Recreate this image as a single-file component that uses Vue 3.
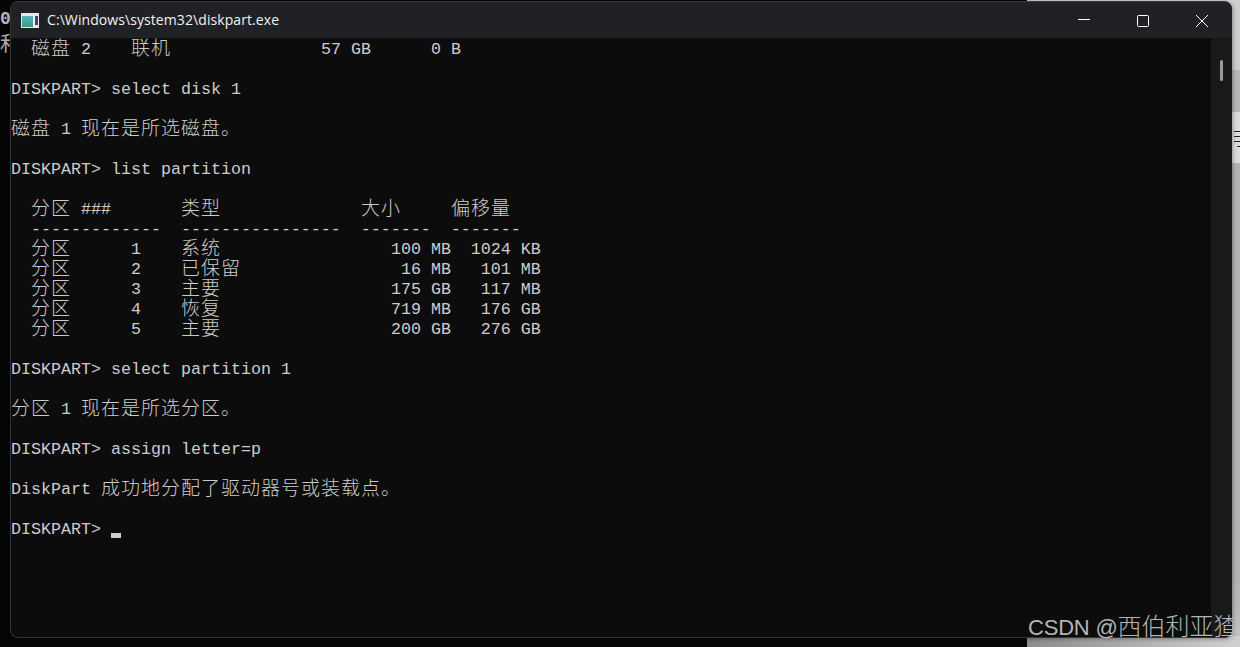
<script setup>
const raw = [
  '  磁盘 2    联机               57 GB      0 B',
  '',
  'DISKPART> select disk 1',
  '',
  '磁盘 1 现在是所选磁盘。',
  '',
  'DISKPART> list partition',
  '',
  '  分区 ###       类型              大小     偏移量',
  '  -------------  ----------------  -------  -------',
  '  分区      1    系统                 100 MB  1024 KB',
  '  分区      2    已保留                16 MB   101 MB',
  '  分区      3    主要                 175 GB   117 MB',
  '  分区      4    恢复                 719 MB   176 GB',
  '  分区      5    主要                 200 GB   276 GB',
  '',
  'DISKPART> select partition 1',
  '',
  '分区 1 现在是所选分区。',
  '',
  'DISKPART> assign letter=p',
  '',
  'DiskPart 成功地分配了驱动器号或装载点。',
  '',
]
const lines = raw.map((text) =>
  (text.match(/[\u3000-\u9fff]+|[^\u3000-\u9fff]+/g) || []).map((t) => ({
    t,
    cjk: /[\u3000-\u9fff]/.test(t),
  }))
)
</script>

<template>
  <div class="desk">
    <span class="peek-zero">0</span>
    <span class="peek-he">和</span>
    <div class="edge-grey"></div>
    <div class="edge-mid"></div>
    <div class="edge-light">
      <i></i><i></i><i></i><i class="short"></i>
    </div>
    <div class="bottom-grey"></div>
    <div class="window">
      <header class="titlebar">
        <svg class="app-icon" width="18" height="15" viewBox="0 0 18 15">
          <defs>
            <linearGradient id="tile" x1="0" y1="0" x2="0" y2="1">
              <stop offset="0" stop-color="#5fb0c4" />
              <stop offset="1" stop-color="#3c9a78" />
            </linearGradient>
          </defs>
          <rect x="0" y="0" width="18" height="15" fill="#e8e8e8" />
          <rect x="1" y="3" width="11" height="11" fill="url(#tile)" />
          <rect x="12" y="3" width="2" height="11" fill="#f4f4f4" />
          <rect x="14" y="3" width="3" height="9" fill="#3a4a5c" />
        </svg>
        <span class="title">C:\Windows\system32\diskpart.exe</span>
        <div class="controls">
          <svg width="14" height="14" viewBox="0 0 14 14">
            <path d="M1 5.5H13" stroke="#fff" fill="none" />
          </svg>
          <svg width="14" height="14" viewBox="0 0 14 14">
            <rect x="1.5" y="1.5" width="11" height="11" rx="1" stroke="#fff" fill="none" />
          </svg>
          <svg width="14" height="14" viewBox="0 0 14 14">
            <path d="M1 1L13 13M13 1L1 13" stroke="#fff" fill="none" />
          </svg>
        </div>
      </header>
      <div class="body">
        <div class="term">
          <div v-for="(line, i) in lines" :key="i" class="row">
            <span v-for="(seg, j) in line" :key="j" :class="{ cjk: seg.cjk }">{{ seg.t }}</span>
          </div>
          <div class="row">DISKPART&gt; <span class="cursor"></span></div>
        </div>
        <div class="scroll"><div class="thumb"></div></div>
      </div>
    </div>
    <div class="mark">CSDN @<span class="mark-cjk">西伯利亚猹</span></div>
  </div>
</template>

<style>
html,
body {
  margin: 0;
  background: #0a0a0a;
}
</style>

<style scoped>
.desk {
  position: relative;
  width: 1240px;
  height: 647px;
  overflow: hidden;
  background: #050505;
}
.peek-zero {
  position: absolute;
  left: 0;
  top: 9px;
  font: bold 18px/20px "Liberation Mono", monospace;
  color: #b8b8b8;
}
.peek-he {
  position: absolute;
  left: 0;
  top: 32px;
  font: 20px/22px "Noto Sans CJK SC", sans-serif;
  color: #b0b0b0;
}
.edge-grey {
  position: absolute;
  left: 1027px;
  top: 0;
  right: 0;
  height: 647px;
  background: linear-gradient(180deg, #cfcfcf 0, #cfcfcf 70px, #b8b8b8 70px, #b8b8b8 600px, #c4c4c4 100%);
}
.edge-mid {
  position: absolute;
  right: 0;
  top: 163px;
  width: 8px;
  height: 420px;
  background: #b4b4b4;
}
.edge-light {
  position: absolute;
  right: 0;
  top: 112px;
  width: 8px;
  height: 51px;
  background: #dcdcdc;
  display: flex;
  flex-direction: column;
  align-items: flex-end;
  gap: 4px;
  padding-top: 19px;
  box-sizing: border-box;
}
.edge-light i {
  display: block;
  width: 6px;
  height: 1px;
  background: #222;
}
.edge-light i.short {
  width: 3px;
}
.bottom-grey {
  position: absolute;
  left: 1027px;
  right: 0;
  top: 636px;
  height: 11px;
  background: linear-gradient(90deg, #8c8c8c, #d0d0d0);
}
.window {
  position: absolute;
  left: 10px;
  top: 1px;
  width: 1222px;
  height: 637px;
  box-sizing: border-box;
  border: 1px solid #343434;
  border-top-color: #3c3c3c;
  border-right: 0;
  border-radius: 8px;
  overflow: hidden;
  display: flex;
  flex-direction: column;
  background: #0c0c0c;
  box-shadow: 1px 1px 4px rgba(0, 0, 0, 0.35);
}
.titlebar {
  height: 36px;
  flex: none;
  display: flex;
  align-items: center;
  background: #202124;
  padding-left: 10px;
}
.app-icon {
  margin-top: 1px;
}
.title {
  margin-left: 8px;
  font: 14px/20px "Open Sans", sans-serif;
  letter-spacing: 0.08px;
  color: #f2f2f2;
  white-space: nowrap;
}
.controls {
  margin-left: auto;
  display: flex;
  gap: 45px;
  padding-right: 23px;
  margin-top: 1px;
}
.body {
  flex: 1;
  min-height: 0;
  display: flex;
}
.term {
  flex: 1;
  padding-top: 2px;
  font: 16.667px/20px "Liberation Mono", monospace;
  color: #cccccc;
}
.row {
  height: 20px;
  line-height: 20px;
  white-space: pre;
}
.cjk {
  font-family: "Noto Sans CJK SC", sans-serif;
  font-size: 19px;
  letter-spacing: 1px;
  line-height: 0;
  font-weight: 300;
  vertical-align: -1px;
}
.cursor {
  display: inline-block;
  width: 10px;
  height: 5px;
  background: #cccccc;
  vertical-align: -4px;
}
.scroll {
  width: 21px;
  flex: none;
  background: #191919;
  position: relative;
}
.thumb {
  position: absolute;
  left: 9px;
  top: 22px;
  width: 3px;
  height: 21px;
  border-radius: 2px;
  background: #9b9b9b;
}
.mark {
  position: absolute;
  left: 1028px;
  top: 613px;
  font: 22px/30px "Liberation Sans", sans-serif;
  letter-spacing: -0.2px;
  color: #b4b4b4;
  white-space: nowrap;
}
.mark-cjk {
  font-family: "Noto Sans CJK SC", sans-serif;
  font-size: 24px;
  letter-spacing: 0;
  line-height: 0;
  font-weight: 300;
}
</style>
